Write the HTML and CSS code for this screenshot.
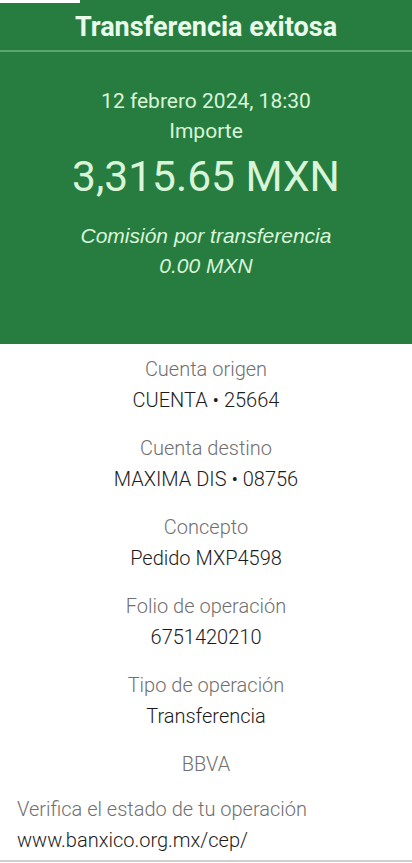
FILE: index.html
```html
<!DOCTYPE html>
<html lang="es">
<head>
<meta charset="utf-8">
<link rel="stylesheet" href="styles.css">
</head>
<body>
<div class="topmark"></div>
<header class="hero">
  <h1 class="title">Transferencia exitosa</h1>
  <div class="rule"></div>
  <div class="summary">
    <div class="date">12 febrero 2024, 18:30</div>
    <div class="label">Importe</div>
    <div class="amount">3,315.65 MXN</div>
    <div class="fee">Comisión por transferencia</div>
    <div class="fee">0.00 MXN</div>
  </div>
</header>
<main class="details">
  <div class="item"><div class="k">Cuenta origen</div><div class="v">CUENTA • 25664</div></div>
  <div class="item"><div class="k">Cuenta destino</div><div class="v">MAXIMA DIS • 08756</div></div>
  <div class="item"><div class="k">Concepto</div><div class="v">Pedido MXP4598</div></div>
  <div class="item"><div class="k">Folio de operación</div><div class="v">6751420210</div></div>
  <div class="item"><div class="k">Tipo de operación</div><div class="v">Transferencia</div></div>
  <div class="item"><div class="k">BBVA</div></div>
  <div class="verify">
    <div class="k">Verifica el estado de tu operación</div>
    <div class="v">www.banxico.org.mx/cep/</div>
  </div>
</main>
<div class="bottomrule"></div>
</body>
</html>
```
FILE: styles.css
```css
html, body {
  margin: 0;
  padding: 0;
  background: #ffffff;
}
body {
  width: 412px;
  height: 863px;
  overflow: hidden;
  position: relative;
  font-family: Roboto, "Liberation Sans", sans-serif;
}
.topmark {
  position: absolute;
  left: 0;
  top: 0;
  width: 80px;
  height: 3px;
  background: #ffffff;
}
.hero {
  background: #277d3f;
  height: 344px;
  color: #d9f5d9;
  text-align: center;
}
.title {
  margin: 0;
  height: 50px;
  line-height: 54px;
  font-size: 27px;
  font-weight: 700;
  color: #eafaea;
}
.rule {
  height: 2px;
  background: #5ea56e;
}
.summary {
  padding-top: 35px;
}
.date {
  font-size: 21px;
  line-height: 28px;
}
.label {
  font-size: 21px;
  line-height: 32px;
}
.amount {
  font-size: 42.5px;
  line-height: 60px;
  margin-bottom: 14px;
}
.fee {
  font-family: "Liberation Sans", Arial, sans-serif;
  font-style: italic;
  font-size: 21px;
  line-height: 30px;
}
.details {
  display: flex;
  flex-direction: column;
  gap: 17px;
  padding-top: 10px;
}
.item {
  text-align: center;
}
.k {
  font-size: 20px;
  line-height: 31px;
  color: #707070;
  font-weight: 300;
}
.v {
  font-size: 20px;
  line-height: 31px;
  color: #1c1c1c;
  font-weight: 300;
}
.verify {
  text-align: left;
  padding-left: 17px;
  margin-top: -3px;
}
.bottomrule {
  position: absolute;
  left: 0;
  right: 0;
  top: 860px;
  height: 2px;
  background: #d0d0d0;
}
```
